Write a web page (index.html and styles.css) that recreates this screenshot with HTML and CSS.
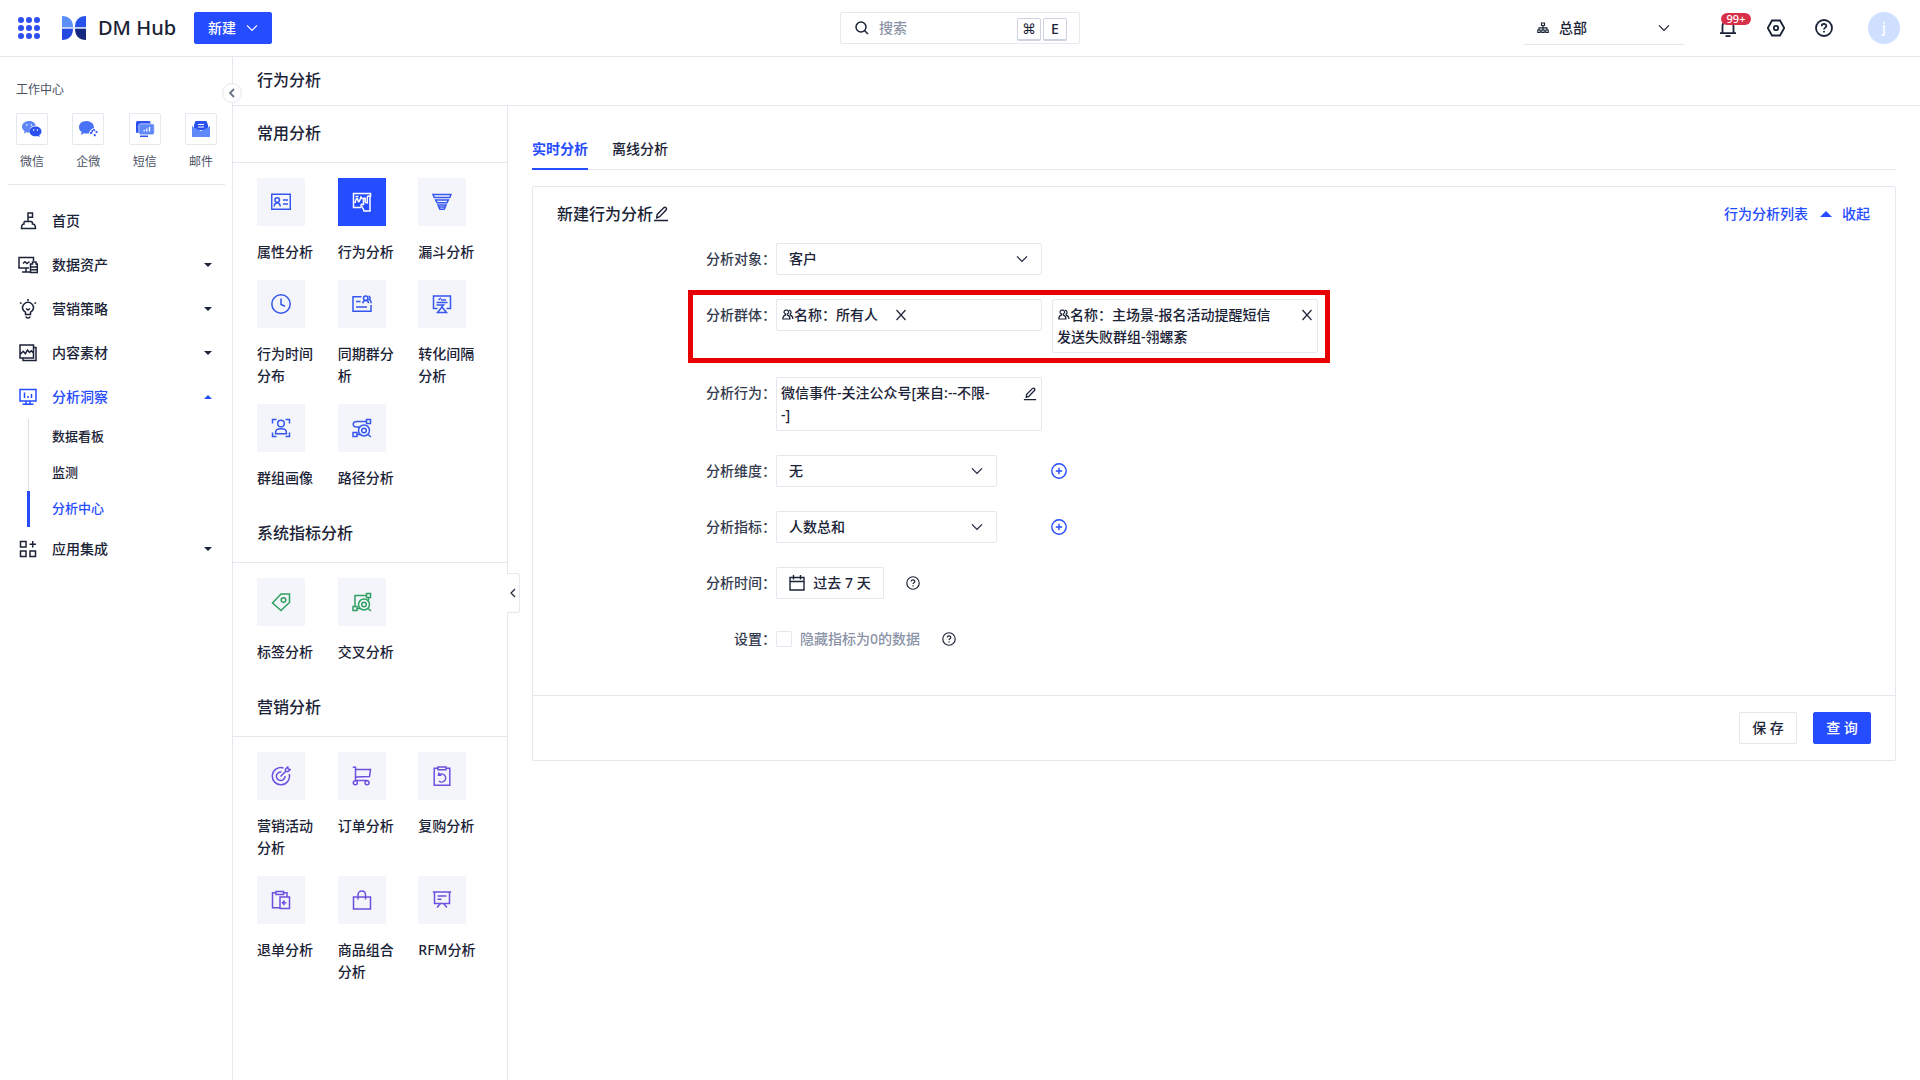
FILE: index.html
```html
<!DOCTYPE html>
<html lang="zh-CN">
<head>
<meta charset="utf-8">
<title>行为分析 - DM Hub</title>
<meta name="viewport" content="width=device-width, initial-scale=1">
<link rel="stylesheet" href="styles.css">
</head>
<body>
<svg class="sprite" aria-hidden="true">
  <symbol id="i-down" viewBox="0 0 12 12"><path d="M1 3.3l5 5 5-5"/></symbol>
  <symbol id="i-left" viewBox="0 0 12 12"><path d="M8 2L4 6l4 4"/></symbol>
  <symbol id="i-help" viewBox="0 0 18 18"><circle cx="9" cy="9" r="8"/><path d="M6.7 7.2c0-3 4.6-3 4.6-.2 0 1.600-2.300 1.700-2.300 3.400M9 12v1.400"/></symbol>
  <symbol id="i-plus" viewBox="0 0 16 16"><circle cx="8" cy="8" r="7.200"/><path d="M8 4.800v6.400M4.800 8h6.400"/></symbol>
  <symbol id="i-pen" viewBox="0 0 16 16"><path d="M1 14.500h14M3.700 11.800l.5-3.400L11 1.600c1.300-1 3.200.7 2.300 2.100L6.600 10.700z"/></symbol>
  <symbol id="i-users" viewBox="0 0 12 12"><path d="M4.200 1.200a1.900 1.900 0 0 1 1 3.700v1.200c2 .4 2.800 1.600 2.800 3.900H.8c0-2.300.7-3.500 2.600-3.900V4.900a1.900 1.900 0 0 1 .8-3.700zM7 1.400c2.300-.2 2.700 2.700 1.200 3.500v1.200c1.700.5 2.700 1.900 2.700 3.900"/></symbol>
  <symbol id="i-close" viewBox="0 0 12 12"><path d="M1.500 1l9 10M10.500 1l-9 10"/></symbol>
</svg>

<header class="topbar">
  <div class="lead">
    <button class="apps" aria-label="应用">
      <svg viewBox="0 0 22 22" width="22" height="22"><g fill="#2b50ee"><circle cx="3" cy="3" r="3"/><circle cx="11" cy="3" r="3"/><circle cx="19" cy="3" r="3"/><circle cx="3" cy="11" r="3"/><circle cx="11" cy="11" r="3"/><circle cx="19" cy="11" r="3"/><circle cx="3" cy="19" r="3"/><circle cx="11" cy="19" r="3"/><circle cx="19" cy="19" r="3"/></g></svg>
    </button>
    <a class="brand" href="#">
      <svg viewBox="0 0 24 24" width="24" height="24"><path fill="#5b8ff5" d="M0 0c7 0 11 4 11 11H0z"/><path fill="#2449e0" d="M0 12.500h11C11 20 7 24 0 24z"/><path fill="#2652e8" d="M24 0c-7 0-11 4-11 11h11z"/><path fill="#15297f" d="M24 12.500H13C13 20 17 24 24 24z"/><path fill="#c5d8fc" d="M0 11h24v1.500H0z"/></svg>
      <span>DM Hub</span>
    </a>
    <button class="btn primary create">新建 <svg class="ico s12"><use href="#i-down"/></svg></button>
  </div>
  <label class="search">
    <svg class="ico s14" viewBox="0 0 14 14"><circle cx="6" cy="6" r="5"/><path d="M9.700 9.700L13 13"/></svg>
    <input type="search" placeholder="搜索" aria-label="搜索">
    <kbd>⌘</kbd><kbd>E</kbd>
  </label>
  <div class="tools">
    <label class="org">
      <svg class="ico s12" viewBox="0 0 12 12"><path d="M4.500 1h3v2.500h-3zM6 3.500V8M2 8V5.800h8V8M.8 8h2.400v2.500H.8zM4.800 8h2.400v2.500H4.800zM8.800 8h2.400v2.500H8.800z"/></svg>
      <select aria-label="组织"><option>总部</option></select>
      <svg class="ico s12 arrow"><use href="#i-down"/></svg>
    </label>
    <button class="tool bell" aria-label="通知"><svg class="ico s18 thick" viewBox="0 0 18 18"><path d="M3.500 14V7.500C3.500 0 14.500 0 14.500 7.500V14M1 14.200h16M6.500 17.200h5"/></svg><span class="badge">99+</span></button>
    <button class="tool" aria-label="设置"><svg class="ico s18 thick" viewBox="0 0 18 18"><path d="M5 1.500h8L17.200 9 13 16.500H5L.8 9z"/><circle cx="9" cy="9" r="2.200"/></svg></button>
    <button class="tool" aria-label="帮助"><svg class="ico s18 thick"><use href="#i-help"/></svg></button>
    <button class="avatar">j</button>
  </div>
</header>

<div class="shell">
  <aside class="sidebar">
    <button class="collapse" aria-label="收起菜单"><svg class="ico s12 thick"><use href="#i-left"/></svg></button>
    <h2 class="work-title">工作中心</h2>
    <div class="work">
      <a href="#"><span class="work-box"><svg viewBox="0 0 20 20" width="20" height="20"><path fill="#5f86f8" d="M7 2c-4 0-7 2.500-7 5.700 0 1.900 1 3.400 2.600 4.500L2 14.500l2.600-1.300c1 .3 2 .4 3.400.3C7 9.500 9.500 6.500 13.800 6.500 13.200 3.900 10.500 2 7 2z"/><path fill="#2a50f0" d="M13.500 7.500c-3.300 0-5.900 2.100-5.900 4.900s2.600 4.900 5.900 4.900c.8 0 1.500-.1 2.200-.3l2 1-.5-1.800c1.400-.9 2.300-2.200 2.300-3.800 0-2.800-2.700-4.900-6-4.900z"/><g fill="#fff"><circle cx="4.800" cy="6" r=".8"/><circle cx="9.300" cy="6" r=".8"/><circle cx="11.700" cy="11" r=".8"/><circle cx="15.400" cy="11" r=".8"/></g></svg></span>微信</a>
      <a href="#"><span class="work-box"><svg viewBox="0 0 20 20" width="20" height="20"><path fill="#4a72f8" d="M8.500 2C3.800 2 1 4.800 1 8.300c0 2 1 3.700 2.600 4.800L3 16l3-1.700c1.700.4 3.500.4 5.200-.1 0-2.200 2-4.700 4.800-5C16.200 5 13 2 8.500 2z"/><path fill="none" stroke="#2a50f0" stroke-width="1.800" d="M15.500 10.200l1.200 1.600M17.600 13.500l1.800-1M16.300 15.200l.8 2M14.300 13.500l-2.200.8M13.500 11.800l1.500.2"/></svg></span>企微</a>
      <a href="#"><span class="work-box"><svg viewBox="0 0 20 20" width="20" height="20"><rect x="1" y="2" width="14.500" height="12" rx="1.500" fill="#2a50f0"/><rect x="3.800" y="4.800" width="15.500" height="11" rx="2" fill="#5f88f8" stroke="#fff" stroke-width=".6"/><path stroke="#fff" stroke-width="1.300" d="M9.200 12.500v-1.800M11.800 12.500V9.500M14.500 12.500V8"/><path fill="#2a50f0" d="M5 16.500h8V18H5z"/></svg></span>短信</a>
      <a href="#"><span class="work-box"><svg viewBox="0 0 20 20" width="20" height="20"><path fill="#2a50f0" d="M4.500 2h11L17 6v5H3V6z"/><path stroke="#fff" d="M7 5.500h6M7 8h6"/><path fill="#5f88f8" d="M1 6.500l1.500 1.800L10 12l7.500-3.700L19 6.500V18H1z"/></svg></span>邮件</a>
    </div>
    <nav class="nav">
      <a href="#"><svg class="ico s20" viewBox="0 0 20 20"><path d="M10 10.500V2h4.500v4.200H10M6.500 10.500h6.500c1 0 1.500.8 1.500 2.500 2 0 3 .8 3 4.500h-14c0-3.200.8-4.500 2.500-4.500 0-1.500 0-2.500.5-2.500z"/></svg>首页</a>
      <a href="#"><svg class="ico s20" viewBox="0 0 20 20"><path d="M11 13H1V2.500h14.500V6M4 17h8M8 13v4M5 8.500l2-1.800L9 8.500l2.500-2M12.500 9h2V7H18v2h1.300v8.500h-6.800zM13 12h6M13 14.700h6"/></svg>数据资产<i class="caret"></i></a>
      <a href="#"><svg class="ico s20" viewBox="0 0 20 20"><path d="M7.500 15.500v-2.300C5.500 12 4.500 10.700 4.500 8.800a5.500 5.500 0 0 1 11 0c0 1.900-1 3.200-3 4.400v2.300zM7.800 17.500c.6 2 3.800 2 4.400 0M8 9.500l2 1.500 2-1.500M10 0v2M2 3.500l1.500 1.200M18 3.500l-1.500 1.200"/></svg>营销策略<i class="caret"></i></a>
      <a href="#"><svg class="ico s20" viewBox="0 0 20 20"><path d="M2 2h13.500v13H2zM15.500 4.500H18v13H5V15M2 11.500l3.200-3.200 2.200 2.400L9.500 7l2 2.500 1.800-1.700 2.200 2.200"/></svg>内容素材<i class="caret"></i></a>
      <a href="#" class="on"><svg class="ico s20" viewBox="0 0 20 20"><path d="M2 2.500h16v11.500H2zM8 14v3M12 14v3M4.500 17.300h11M6.500 5.500v5.500M10 9v2M13.500 7v4"/></svg>分析洞察<i class="caret up"></i></a>
      <div class="subnav">
        <a href="#">数据看板</a>
        <a href="#">监测</a>
        <a href="#" class="on">分析中心</a>
      </div>
      <a href="#"><svg class="ico s20" viewBox="0 0 20 20"><path d="M2.500 2.500H8V8H2.500zM2.500 12H8v5.500H2.500zM12 12h5.500v5.500H12zM14.700 2v6.500M11.500 5.200H18"/></svg>应用集成<i class="caret"></i></a>
    </nav>
  </aside>

  <div class="page">
    <h1 class="page-title">行为分析</h1>
    <div class="body">
      <section class="catalog">
        <button class="fold" aria-label="收起面板"><svg class="ico s12"><use href="#i-left"/></svg></button>
        <h2>常用分析</h2>
        <div class="tiles blue">
          <a href="#"><span class="tile"><svg class="ico s20" viewBox="0 0 20 20"><path d="M.7 2.300h18.600v15H.7zM12 8h5M12 12h5M3.200 14.500c0-2.500 1-3.500 3-3.500s3 1 3 3.500"/><circle cx="6.200" cy="8" r="2.300"/></svg></span>属性分析</a>
          <a href="#"><span class="tile active"><svg class="ico s20" viewBox="0 0 20 20"><path d="M9 15.500H1.500V1.500h17V5M3 11c1-5 2.500-6 3-2.500S8 8 9 5l1.500 2M3.500 4.500h3M11.500 13V7c0-1.300 1.800-1.300 1.800 0v3.500M13.300 10.500l2 .3V5c0-1.500 2.700-1.500 2.700 0v14h-6c0-2-1.500-3-3-5.500-.3-1.300 1.300-1.700 2.500-.3"/></svg></span>行为分析</a>
          <a href="#"><span class="tile"><svg class="ico s20" viewBox="0 0 20 20"><path d="M1 2.500h18l-1.300 3H2.300zM3.700 8h12.600L15 10.700H5zM6 13h8l-1.800 4.200H7.800zM6.500 15h7" /></svg></span>漏斗分析</a>
          <a href="#"><span class="tile"><svg class="ico s20" viewBox="0 0 20 20"><circle cx="10" cy="10" r="9.200"/><path d="M10 4.500v6l4 1.800"/></svg></span>行为时间分布</a>
          <a href="#"><span class="tile"><svg class="ico s20" viewBox="0 0 20 20"><path d="M9.500 2.700H1v14.500h18V11M4 7.500h4.500M4 13h11M10.800 9.300c0-2 1-2.800 3-2.800s2.800.8 2.800 2.800M16.500 2.300c2 0 2 2.700.7 3.300 1.300.5 2 1.500 2 3.700"/><circle cx="13.700" cy="4.200" r="2.200"/></svg></span>同期群分析</a>
          <a href="#"><span class="tile"><svg class="ico s20" viewBox="0 0 20 20"><path d="M5.500 14.500H1.500V2h17v12.500h-4M4.500 8.500h11M4.500 11h7l-2 2M9 6h5M9 4l-2.500 2M10 13l4.500 5.500h-9z"/></svg></span>转化间隔分析</a>
          <a href="#"><span class="tile"><svg class="ico s20" viewBox="0 0 20 20"><path d="M1.500 5.500v-4h4M14.500 1.500h4v4M18.500 14.500v4h-4M5.500 18.500h-4v-4M4.500 15.700c0-3.700 1-5 5.500-5s5.500 1.300 5.500 5z"/><circle cx="10" cy="5.500" r="3.300"/></svg></span>群组画像</a>
          <a href="#"><span class="tile"><svg class="ico s20" viewBox="0 0 20 20"><path d="M1 14.500h4v4H1zM14.500 1.500h4v4h-4zM14.500 3.500H5c-5 0-5 5.500 0 5.500h2.500M5 16.500h3M16 16.500l3 2.500"/><circle cx="12" cy="12.500" r="5.500"/><circle cx="12" cy="12.500" r="2.300"/></svg></span>路径分析</a>
        </div>
        <h2>系统指标分析</h2>
        <div class="tiles green">
          <a href="#"><span class="tile"><svg class="ico s20" viewBox="0 0 20 20"><path d="M1.500 11L10 2h8.500v8.500l-8.500 8z"/><circle cx="12.500" cy="8" r="2.300"/></svg></span>标签分析</a>
          <a href="#"><span class="tile"><svg class="ico s20" viewBox="0 0 20 20"><path d="M1 14.500h4v4H1zM14.500 1.500h4v4h-4zM14.500 3.500H3v11M16.500 5.500v3M5 16.500h3M16 16.500l3 2.500"/><circle cx="12" cy="12.500" r="5.500"/><circle cx="12" cy="12.500" r="2.300"/></svg></span>交叉分析</a>
        </div>
        <h2>营销分析</h2>
        <div class="tiles violet">
          <a href="#"><span class="tile"><svg class="ico s20" viewBox="0 0 20 20"><path d="M12.500 2A8.600 8.600 0 1 0 18.200 8M10.500 6A4.300 4.300 0 1 0 14 10M9.500 10.500L15 5M14.500 5.500V3l2.200-2 .5 2 2 .5-2 2z"/></svg></span>营销活动分析</a>
          <a href="#"><span class="tile"><svg class="ico s20" viewBox="0 0 20 20"><path d="M.8 1.300h2.700V14M3.500 3.500h15l-1 7-14 .5M3.500 14.500h12"/><circle cx="3.300" cy="16.700" r="2"/><circle cx="15" cy="16.700" r="2"/></svg></span>订单分析</a>
          <a href="#"><span class="tile"><svg class="ico s20" viewBox="0 0 20 20"><path d="M6 2.200H2.200v17h15.600v-17H14M6 1h8v2.800H6zM7 6.500L6.500 9.300h3M7 9a4 4 0 1 1 0 6"/></svg></span>复购分析</a>
          <a href="#"><span class="tile"><svg class="ico s20" viewBox="0 0 20 20"><path d="M5 2.700H1.500v15H9M12.500 2.700H16V7M5 1.500h7.500v3H5zM9 7h9.500v11.500H9zM15.500 12.700h-4M13.500 10.500l-2 2.200 2 2.200"/></svg></span>退单分析</a>
          <a href="#"><span class="tile"><svg class="ico s20" viewBox="0 0 20 20"><path d="M1.500 7h17v12h-17zM6 9.500V5c0-5.300 7.500-5.300 7.500 0v4.500"/></svg></span>商品组合分析</a>
          <a href="#"><span class="tile"><svg class="ico s20" viewBox="0 0 20 20"><path d="M.8 2h18.400M2.500 2v11.500h15V2M5.500 6h9M5.500 9.300h4M8.500 13.500L5 17.500M11.500 13.500l3.500 4"/></svg></span>RFM分析</a>
        </div>
      </section>

      <main class="main">
        <nav class="tabs">
          <a href="#" class="on">实时分析</a>
          <a href="#">离线分析</a>
        </nav>
        <form class="card">
          <div class="card-head">
            <h2>新建行为分析</h2>
            <button type="button" class="plain" aria-label="编辑名称"><svg class="ico s16"><use href="#i-pen"/></svg></button>
            <div class="links"><a href="#">行为分析列表</a><a href="#"><i class="tri"></i>收起</a></div>
          </div>
          <div class="rows">
            <div class="row">
              <label for="target">分析对象：</label>
              <div class="ctl"><span class="select wide"><select id="target"><option>客户</option></select><svg class="ico s12 arrow"><use href="#i-down"/></svg></span></div>
            </div>
            <div class="row marked">
              <span class="lbl">分析群体：</span>
              <div class="ctl near">
                <div class="tag"><p><svg class="ico s12"><use href="#i-users"/></svg>名称：所有人</p><button type="button" class="plain inline" aria-label="移除"><svg class="ico s12"><use href="#i-close"/></svg></button></div>
                <div class="tag"><p class="grow"><svg class="ico s12"><use href="#i-users"/></svg>名称：主场景-报名活动提醒短信发送失败群组-翎螺紊</p><button type="button" class="plain" aria-label="移除"><svg class="ico s12"><use href="#i-close"/></svg></button></div>
              </div>
            </div>
            <div class="row">
              <span class="lbl">分析行为：</span>
              <div class="ctl"><div class="tag"><p class="grow">微信事件-关注公众号[来自:--不限-<wbr>-]</p><button type="button" class="plain" aria-label="编辑行为"><svg class="ico s14"><use href="#i-pen"/></svg></button></div></div>
            </div>
            <div class="row">
              <label for="dim">分析维度：</label>
              <div class="ctl add"><span class="select"><select id="dim"><option>无</option></select><svg class="ico s12 arrow"><use href="#i-down"/></svg></span><button type="button" class="plain plus" aria-label="添加维度"><svg class="ico s16"><use href="#i-plus"/></svg></button></div>
            </div>
            <div class="row">
              <label for="metric">分析指标：</label>
              <div class="ctl add"><span class="select"><select id="metric"><option>人数总和</option></select><svg class="ico s12 arrow"><use href="#i-down"/></svg></span><button type="button" class="plain plus" aria-label="添加指标"><svg class="ico s16"><use href="#i-plus"/></svg></button></div>
            </div>
            <div class="row">
              <label for="time">分析时间：</label>
              <div class="ctl hint"><button type="button" id="time" class="btn date"><svg class="ico s16" viewBox="0 0 16 16"><path d="M1 2.500h14v12.500H1zM1 6.500h14M4.500 0v4.500M11.500 0v4.500"/></svg>过去 7 天</button><svg class="ico s14"><use href="#i-help"/></svg></div>
            </div>
            <div class="row">
              <span class="lbl">设置：</span>
              <div class="ctl hint"><label class="check"><input type="checkbox" disabled>隐藏指标为0的数据</label><svg class="ico s14"><use href="#i-help"/></svg></div>
            </div>
          </div>
          <div class="card-foot">
            <button type="button" class="btn">保 存</button>
            <button type="button" class="btn primary">查 询</button>
          </div>
        </form>
      </main>
    </div>
  </div>
</div>
</body>
</html>
```
FILE: styles.css
```css
:root {
  --blue: #264cff;
  --ink: #1b2337;
  --line: #e6e8ef;
}

*, ::before, ::after { box-sizing: border-box; }

body {
  margin: 0;
  min-height: 100vh;
  display: flex;
  flex-direction: column;
  font: 500 14px/22px "Noto Sans", "Noto Sans CJK SC", sans-serif;
  color: var(--ink);
  background: #fff;
}

a { color: inherit; text-decoration: none; }
h1, h2, p { margin: 0; font-weight: 500; }
h1, h2 { font-size: 16px; line-height: 24px; }
button, input, select { font: inherit; color: inherit; }
button { cursor: pointer; }

.sprite { position: absolute; width: 0; height: 0; }
.ico { flex: none; fill: none; stroke: currentColor; stroke-width: 1.2; }
.s12 { width: 12px; height: 12px; }
.s14 { width: 14px; height: 14px; stroke-width: 1.5; }
.s16 { width: 16px; height: 16px; stroke-width: 1.4; }
.s18 { width: 18px; height: 18px; }
.s20 { width: 20px; height: 20px; stroke-width: 1.5; }
.thick { stroke-width: 1.8; }

.btn {
  display: flex;
  align-items: center;
  justify-content: center;
  height: 32px;
  padding: 0 12px;
  border: 1px solid var(--line);
  border-radius: 2px;
  background: #fff;
}
.btn.primary { border-color: var(--blue); background: var(--blue); color: #fff; }
.plain { display: flex; padding: 0; border: 0; background: none; }

/* Top bar */
.topbar {
  display: grid;
  grid-template-columns: 1fr auto 1fr;
  align-items: center;
  height: 57px;
  padding: 0 20px;
  border-bottom: 1px solid var(--line);
}
.lead { display: flex; align-items: center; margin-left: -2px; }
.apps { display: flex; padding: 0; border: 0; background: none; }
.brand { display: flex; align-items: center; gap: 12px; margin: 0 18px 0 22px; font-size: 20px; line-height: 28px; }
.create { width: 78px; gap: 10px; }
.search {
  display: flex;
  align-items: center;
  gap: 2px;
  width: 240px;
  height: 32px;
  padding: 0 12px 0 14px;
  border: 1px solid var(--line);
  border-radius: 2px;
}
.search input { flex: 1; min-width: 0; padding: 0 8px; border: 0; outline: 0; background: none; }
.search input::placeholder { color: #8b93a7; }
kbd {
  width: 24px;
  height: 23px;
  margin-top: 2px;
  border: 1px solid #cdd1e0;
  border-bottom-width: 2px;
  border-radius: 2px;
  font: 500 14px/20px "Noto Sans", "DejaVu Sans", sans-serif;
  text-align: center;
}
.tools { display: flex; align-items: center; justify-content: flex-end; gap: 30px; }
.org {
  display: flex;
  align-items: center;
  gap: 10px;
  width: 160px;
  height: 33px;
  margin-right: 5px;
  padding: 0 14px 0 13px;
  border-bottom: 1px solid var(--line);
}
.org select { flex: 1; }
.tool { position: relative; display: flex; padding: 0; border: 0; background: none; }
.badge {
  position: absolute;
  left: 2px;
  top: -6px;
  width: 30px;
  height: 12px;
  border-radius: 6px;
  background: #d9304a;
  color: #fff;
  font-size: 11px;
  line-height: 12px;
}
.avatar { width: 32px; height: 32px; margin-left: 5px; padding: 0; border: 0; border-radius: 50%; background: #cfdfff; color: #fff; }

select { appearance: none; border: 0; outline: 0; padding: 0; background: none; }

.shell { flex: 1; display: flex; }

/* Sidebar */
.sidebar { position: relative; flex: none; width: 233px; border-right: 1px solid var(--line); }
.collapse {
  position: absolute;
  right: -10px;
  top: 26px;
  z-index: 1;
  display: grid;
  place-items: center;
  width: 20px;
  height: 20px;
  padding: 0;
  border: 1px solid var(--line);
  border-radius: 50%;
  background: #fff;
  color: #6b7285;
}
.work-title { padding: 23px 16px 13px; font-size: 12px; line-height: 20px; font-weight: 400; color: #4b5264; }
.work {
  display: flex;
  justify-content: space-between;
  margin: 0 7px 0 8px;
  padding: 0 8px 12px;
  border-bottom: 1px solid var(--line);
  font-size: 12px;
  line-height: 20px;
  font-weight: 400;
  color: #4b5264;
}
.work a { display: grid; justify-items: center; gap: 7px; }
.work-box { display: grid; place-items: center; width: 32px; height: 32px; border: 1px solid var(--line); border-radius: 2px; }
.nav { padding-top: 14px; }
.nav > a { display: flex; align-items: center; gap: 14px; height: 44px; padding: 0 20px 0 18px; }
.nav .on { color: var(--blue); }
.caret { margin-left: auto; border: 4px solid transparent; border-top-color: currentColor; border-bottom: 0; }
.caret.up { border-top: 0; border-bottom: 4px solid currentColor; }
.subnav { display: grid; margin-left: 28px; font-size: 13px; box-shadow: inset 1px 0 #dcdfe8; }
.subnav a { height: 36px; padding-left: 24px; line-height: 34px; }
.subnav .on { box-shadow: inset 2px 0 var(--blue), -1px 0 var(--blue); }

/* Page */
.page { flex: 1; min-width: 0; display: flex; flex-direction: column; }
.page-title { padding: 11px 24px 13px; border-bottom: 1px solid var(--line); }
.body { flex: 1; display: flex; }

/* Catalog */
.catalog { position: relative; flex: none; width: 275px; border-right: 1px solid var(--line); }
.catalog h2 { padding: 15px 24px 17px; border-bottom: 1px solid var(--line); }
.tiles { display: grid; grid-template-columns: repeat(3, 1fr); padding: 15px 8px 0 24px; }
.tiles a { width: 60px; padding-bottom: 17px; }
.tile { display: grid; place-items: center; width: 48px; height: 48px; margin-bottom: 15px; background: #f4f5fa; }
.tile.active { background: var(--blue); color: #fff; }
.blue .tile:not(.active) { color: #3557ee; }
.green .tile { color: #2ea062; }
.violet .tile { color: #6d4fe0; }
.fold {
  position: absolute;
  left: 100%;
  top: 467px;
  display: grid;
  place-items: center;
  width: 13px;
  height: 40px;
  padding: 0;
  border: 1px solid var(--line);
  border-left: 0;
  border-radius: 0 3px 3px 0;
  background: #fff;
}

/* Main */
.main { flex: 1; min-width: 0; padding: 24px; }
.tabs { display: flex; gap: 24px; margin-bottom: 16px; box-shadow: inset 0 -1px var(--line); }
.tabs a { padding: 8px 0 10px; }
.tabs .on { color: var(--blue); font-weight: 700; box-shadow: inset 0 -2px var(--blue); }
.card { border: 1px solid var(--line); border-radius: 2px; }
.card-head { display: flex; align-items: center; padding: 15px 24px 17px; }
.links { display: flex; gap: 12px; margin: 0 1px 0 auto; color: var(--blue); }
.links a { display: flex; align-items: center; gap: 10px; }
.tri { border: 6px solid transparent; border-top: 0; border-bottom-color: currentColor; }
.rows { display: grid; gap: 24px; padding: 0 24px 40px; border-bottom: 1px solid var(--line); }
.row { display: grid; grid-template-columns: 4fr 20fr; }
.row > label, .lbl { padding-top: 5px; text-align: right; color: #353c50; }
.ctl { display: flex; align-items: flex-start; min-height: 32px; }
.ctl.near { gap: 10px; }
.ctl.add { align-items: center; gap: 54px; }
.ctl.hint { align-items: center; gap: 22px; }
.plus { color: var(--blue); }
.select { display: grid; align-items: center; width: 221px; height: 32px; border: 1px solid var(--line); border-radius: 2px; }
.select.wide { width: 266px; }
.select > * { grid-area: 1 / 1; }
.select select { width: 100%; height: 30px; padding: 0 12px; }
.arrow { justify-self: end; margin-right: 13px; pointer-events: none; }
.org .arrow { margin: 0; }
.tag { display: flex; width: 266px; padding: 4px; border: 1px solid var(--line); border-radius: 2px; }
.tag p { max-width: 215px; }
.tag p .ico { margin-left: 1px; vertical-align: -1px; }
.tag .grow { flex: 1; }
.tag .plain { margin: 5px 0 0 auto; height: 14px; }
.tag .plain.inline { margin-left: 17px; }
.date { width: 108px; gap: 8px; }
.check { display: flex; align-items: center; gap: 8px; color: #8b93a7; }
.check input { appearance: none; width: 16px; height: 16px; margin: 0; border: 1px solid var(--line); border-radius: 2px; background: #fff; }
.card-foot { display: flex; justify-content: flex-end; gap: 16px; padding: 16px 24px; }
.card-foot .btn { width: 58px; }

/* Highlight frame over the group row */
.marked { position: relative; }
.marked::after {
  content: "";
  position: absolute;
  top: -9px;
  bottom: -10px;
  left: calc(100% / 6 - 88px);
  width: 642px;
  border: 5px solid #e80000;
  pointer-events: none;
}
```
